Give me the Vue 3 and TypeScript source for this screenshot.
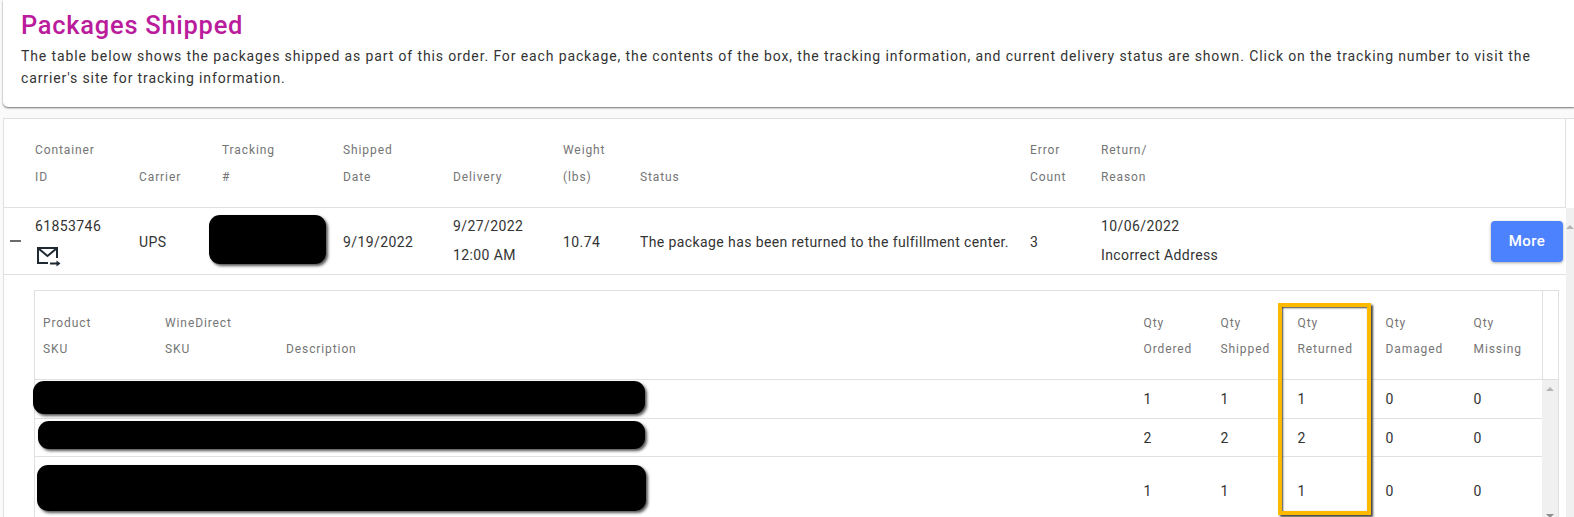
<script setup lang="ts">
interface Item { ordered: number; shipped: number; returned: number; damaged: number; missing: number; tall?: boolean }
const items: Item[] = [
  { ordered: 1, shipped: 1, returned: 1, damaged: 0, missing: 0 },
  { ordered: 2, shipped: 2, returned: 2, damaged: 0, missing: 0 },
  { ordered: 1, shipped: 1, returned: 1, damaged: 0, missing: 0, tall: true },
]
</script>

<template>
  <div class="page">
    <section class="intro">
      <h1>Packages Shipped</h1>
      <p>The table below shows the packages shipped as part of this order. For each package, the contents of the box, the tracking information, and current delivery status are shown. Click on the tracking number to visit the carrier's site for tracking information.</p>
    </section>

    <section class="table">
      <div class="outer-grid head">
        <span></span>
        <span>Container<br />ID</span>
        <span>Carrier</span>
        <span>Tracking<br />#</span>
        <span>Shipped<br />Date</span>
        <span>Delivery</span>
        <span>Weight<br />(lbs)</span>
        <span>Status</span>
        <span>Error<br />Count</span>
        <span>Return/<br />Reason</span>
      </div>

      <div class="body">
        <div class="main">
          <div class="outer-grid row">
            <span class="minus"></span>
            <div class="container-cell">
              <span>61853746</span>
              <svg class="mail" viewBox="0 0 24 20" width="24" height="20" fill="none" stroke="#1f2933" stroke-width="2">
                <path d="M11 16H1V1h19v10" />
                <path d="M1.5 1.5 10.5 9l9-7.5" />
                <path d="M13 16.5h8" />
                <path d="M19.5 13.5l4 3-4 3z" fill="#1f2933" stroke="none" />
              </svg>
            </div>
            <span class="one">UPS</span>
            <span></span>
            <span class="one">9/19/2022</span>
            <span>9/27/2022<br />12:00 AM</span>
            <span class="one">10.74</span>
            <span class="one">The package has been returned to the fulfillment center.</span>
            <span class="one">3</span>
            <div class="return-cell">
              <span>10/06/2022<br />Incorrect Address</span>
              <button type="button" class="more">More</button>
            </div>
          </div>

          <div class="detail">
            <div class="inner">
              <div class="inner-grid inner-head">
                <span>Product<br />SKU</span>
                <span>WineDirect<br />SKU</span>
                <span>Description</span>
                <span>Qty<br />Ordered</span>
                <span>Qty<br />Shipped</span>
                <span>Qty<br />Returned</span>
                <span>Qty<br />Damaged</span>
                <span>Qty<br />Missing</span>
              </div>
              <div class="inner-body">
                <div class="inner-rows">
                  <div v-for="(item, i) in items" :key="i" class="inner-grid inner-row" :class="{ tall: item.tall }">
                    <span></span><span></span><span></span>
                    <span>{{ item.ordered }}</span>
                    <span>{{ item.shipped }}</span>
                    <span>{{ item.returned }}</span>
                    <span>{{ item.damaged }}</span>
                    <span>{{ item.missing }}</span>
                  </div>
                </div>
                <div class="track inner-track">
                  <i class="arrow up"></i>
                  <i class="arrow down"></i>
                </div>
              </div>
            </div>
          </div>
        </div>
        <div class="track outer-track">
          <i class="arrow up"></i>
        </div>
      </div>
    </section>

    <i class="redact r1"></i>
    <i class="redact r2"></i>
    <i class="redact r3"></i>
    <i class="redact r4"></i>
    <i class="highlight"></i>
  </div>
</template>

<style>
html, body { margin: 0; overflow: hidden; }
</style>

<style scoped>
.page {
  position: relative;
  height: 517px;
  overflow: hidden;
  background: #fafafa;
  font-family: Roboto, "Liberation Sans", sans-serif;
  color: #333;
}
.intro {
  box-sizing: border-box;
  height: 107px;
  margin-left: 3px;
  padding: 9px 18px 0;
  background: #fff;
  border-radius: 0 0 0 5px;
  box-shadow: 0 1px 2px rgba(0, 0, 0, 0.55);
}
h1 {
  margin: 0;
  font-size: 25.5px;
  line-height: 32px;
  font-weight: 500;
  letter-spacing: 0.72px;
  color: #ba1c9c;
}
p {
  margin: 4px 0 0;
  font-size: 14px;
  line-height: 22px;
  letter-spacing: 0.88px;
  color: #333;
}
.table {
  margin: 11px 0 0 3px;
  background: #fff;
  border-top: 1px solid #e0e0e0;
  border-left: 1px solid #e0e0e0;
}
.outer-grid {
  display: grid;
  grid-template-columns: 31px 104px 83px 121px 110px 110px 77px 390px 71px 1fr;
  align-items: center;
  font-size: 14px;
  line-height: 29px;
  letter-spacing: 0.4px;
}
.head {
  box-sizing: border-box;
  height: 89px;
  margin-right: 8px;
  align-items: end;
  padding-bottom: 16px;
  border-right: 1px solid #e0e0e0;
  border-bottom: 1px solid #e0e0e0;
  font-size: 12px;
  line-height: 27px;
  letter-spacing: 0.9px;
  color: #757575;
}
.body { display: flex; }
.main { flex: 1; min-width: 0; }
.row {
  height: 66px;
  border-bottom: 1px solid #e0e0e0;
}
.one { padding-top: 2px; }
.minus {
  width: 11px;
  height: 2px;
  margin-left: 6px;
  background: #6b6b6b;
}
.container-cell { display: flex; flex-direction: column; align-items: flex-start; }
.mail { margin: 6px 0 4px 2px; }
.return-cell { display: flex; justify-content: space-between; align-items: center; padding-right: 3px; }
.more {
  width: 72px;
  height: 41px;
  padding: 0;
  border: 0;
  border-radius: 4px;
  background: #4d82ff;
  color: #fff;
  font: 500 15px/1 Roboto, sans-serif;
  letter-spacing: 0.4px;
  box-shadow: 0 1px 3px rgba(0, 0, 0, 0.35);
}
.detail { padding: 15px 7px 0 30px; }
.inner { border: 1px solid #e0e0e0; border-bottom: 0; }
.inner-grid {
  display: grid;
  grid-template-columns: 122px 121px 857.5px 77px 77px 88px 88px 1fr;
  align-items: center;
  padding-left: 8px;
  font-size: 12px;
  letter-spacing: 0.9px;
}
.inner-head {
  box-sizing: border-box;
  height: 89px;
  padding-bottom: 17px;
  padding-right: 16px;
  align-items: end;
  line-height: 26px;
  color: #757575;
  border-bottom: 1px solid #e0e0e0;
  position: relative;
}
.inner-head::after {
  content: "";
  position: absolute;
  top: 0;
  bottom: 0;
  right: 15px;
  width: 1px;
  background: #e0e0e0;
}
.inner-body { display: flex; }
.inner-rows { flex: 1; min-width: 0; }
.inner-row {
  box-sizing: border-box;
  height: 39px;
  font-size: 14px;
  letter-spacing: 0.4px;
  border-bottom: 1px solid #e0e0e0;
}
.inner-row:nth-child(2) { height: 38px; }
.inner-row.tall { height: 68px; }
.track {
  display: flex;
  flex-direction: column;
  justify-content: space-between;
  align-items: center;
  flex: none;
  background: #f0f0f0;
}
.inner-track { width: 16px; height: 138px; padding: 7px 0 0; box-sizing: border-box; }
.outer-track { width: 8px; padding-top: 17px; }
.arrow {
  display: block;
  width: 0;
  height: 0;
  border-left: 4px solid transparent;
  border-right: 4px solid transparent;
}
.arrow.up { border-bottom: 4px solid #b5b5b5; }
.arrow.down { border-top: 4px solid #8f8f8f; }
.redact {
  position: absolute;
  background: #000;
  border-radius: 11px;
  box-shadow: 2px 2px 3px #555;
}
.r1 { left: 209px; top: 215px; width: 117px; height: 49px; }
.r2 { left: 33px; top: 381px; width: 612px; height: 33px; }
.r3 { left: 38px; top: 421px; width: 607px; height: 28px; }
.r4 { left: 37px; top: 465px; width: 609px; height: 46px; }
.highlight {
  position: absolute;
  left: 1278px;
  top: 303px;
  width: 85px;
  height: 204px;
  border: 4.5px solid #ffb900;
  box-shadow: 2px 2px 2px #444, inset 1px 1px 2px #444;
}
</style>
